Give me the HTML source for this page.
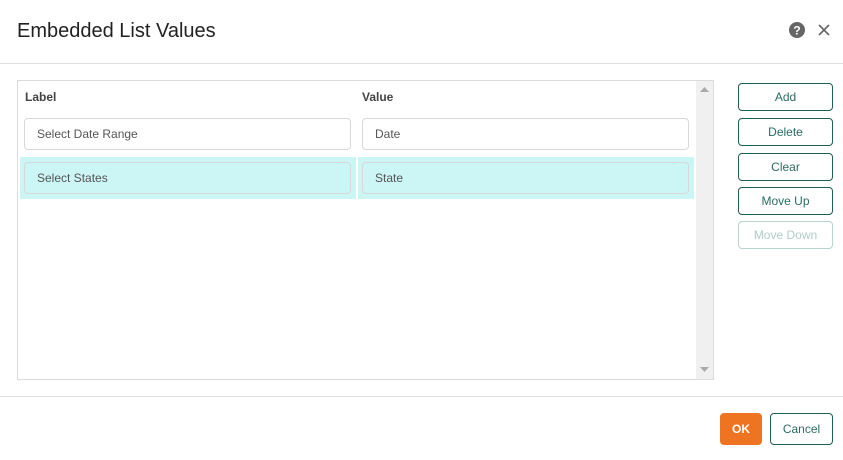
<!DOCTYPE html>
<html><head><meta charset="utf-8"><style>
*{box-sizing:border-box;margin:0;padding:0}
body{width:843px;height:460px;background:#fff;font-family:"Liberation Sans",sans-serif;position:relative;overflow:hidden;color:#333}
.a{position:absolute}
.title{left:17px;top:20px;font-size:20px;color:#222}
.hr{left:0;width:843px;height:1px;background:#e0e0e0}
.grid{left:17px;top:80px;width:697px;height:300px;border:1px solid #dcdcdc}
.sb{left:696px;top:81px;width:17px;height:298px;background:#f0f0f0}
.hd{font-size:12px;font-weight:bold;color:#444;top:90px}
.inp{height:32px;border:1px solid #d8d8d8;border-radius:4px;font-size:12px;color:#555;padding:0 12px;line-height:30px}
.hl{background:#ccf5f5;top:157px;height:42px}
.btn{left:738px;width:95px;height:28px;border:1px solid #1d5f56;border-radius:4px;font-size:12px;color:#2a6b63;text-align:center;line-height:26px}
</style></head><body>
<div class="a title">Embedded List Values</div>
<svg class="a" style="left:788px;top:21px" width="18" height="18" viewBox="0 0 18 18"><circle cx="9" cy="9" r="8" fill="#666"/><text x="9" y="13.5" font-size="12" font-weight="bold" fill="#fff" text-anchor="middle" font-family="Liberation Sans">?</text></svg>
<svg class="a" style="left:818px;top:24px" width="12" height="12"><path d="M1 1L11 11M11 1L1 11" stroke="#666" stroke-width="1.6"/></svg>
<div class="a hr" style="top:63px"></div>
<div class="a grid"></div>
<div class="a sb"></div>
<svg class="a" style="left:700px;top:87px" width="9" height="6"><path d="M0 5L4.5 0L9 5Z" fill="#aaa"/></svg>
<svg class="a" style="left:700px;top:367px" width="9" height="6"><path d="M0 0L4.5 5L9 0Z" fill="#aaa"/></svg>
<div class="a hd" style="left:25px">Label</div>
<div class="a hd" style="left:362px">Value</div>
<div class="a inp" style="left:24px;top:118px;width:327px">Select Date Range</div>
<div class="a inp" style="left:362px;top:118px;width:327px">Date</div>
<div class="a hl" style="left:20px;width:336px"></div>
<div class="a hl" style="left:358px;width:336px"></div>
<div class="a inp" style="left:24px;top:162px;width:327px">Select States</div>
<div class="a inp" style="left:362px;top:162px;width:327px">State</div>
<div class="a btn" style="top:83px">Add</div>
<div class="a btn" style="top:118px">Delete</div>
<div class="a btn" style="top:153px">Clear</div>
<div class="a btn" style="top:187px">Move Up</div>
<div class="a btn" style="top:221px;border-color:#b5d3cf;color:#b0ccc8">Move Down</div>
<div class="a hr" style="top:396px"></div>
<div class="a" style="left:720px;top:413px;width:42px;height:32px;background:#ee7421;border-radius:4px;color:#fff;font-size:12px;font-weight:bold;text-align:center;line-height:32px">OK</div>
<div class="a btn" style="left:770px;top:413px;width:63px;height:32px;line-height:30px">Cancel</div>
</body></html>
